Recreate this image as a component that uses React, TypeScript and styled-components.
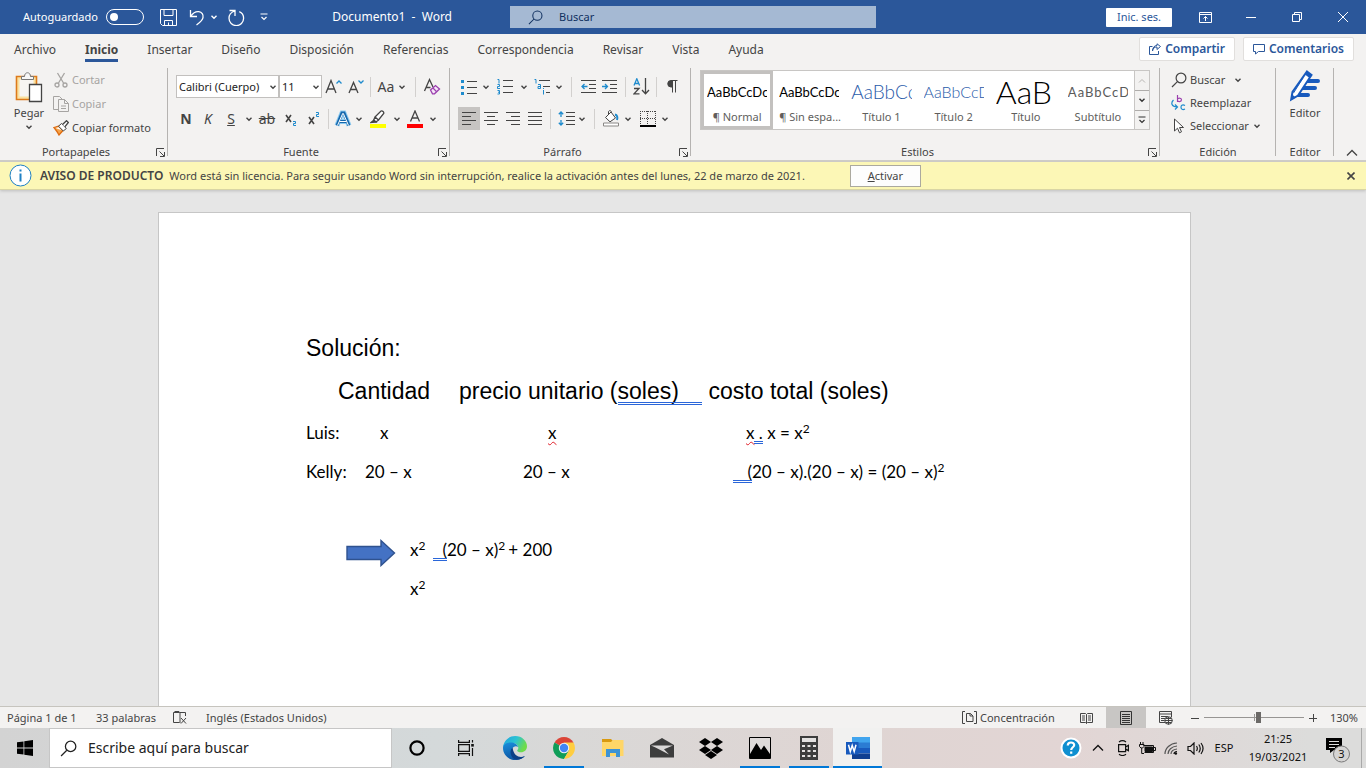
import React from "react";
import styled, { createGlobalStyle, css } from "styled-components";

const ui = `"Noto Sans", "Open Sans", sans-serif`;
const calibri = `Lato, "Noto Sans", sans-serif`;
const blue = "#2b579a";
const ink = "#444444";
const accent = "#1e8bcd";

const GlobalStyle = createGlobalStyle`
  *, *::before, *::after { box-sizing: border-box; }
  html, body, #root { height: 100%; }
  body { margin: 0; font-family: ${ui}; font-size: 11px; line-height: 16px; color: ${ink}; background: #e6e6e6; }
  button, input, select { font: inherit; color: inherit; margin: 0; }
  button { border: 0; padding: 0; background: none; white-space: nowrap; }
  svg { display: block; flex: none; }
`;

const Shell = styled.div`
  height: 100vh;
  min-height: 480px;
  display: flex;
  flex-direction: column;
  overflow: hidden;
`;

/* ---------- title bar ---------- */

const TitleBar = styled.header`
  display: grid;
  grid-template-columns: 510fr 366fr 490fr;
  align-items: center;
  height: 34px;
  flex: none;
  background: ${blue};
  color: #fff;
`;

const QuickAccess = styled.div`
  display: flex;
  align-items: center;
  padding-left: 23px;
`;

const AutoSave = styled.label`
  display: flex;
  align-items: center;
  gap: 8px;
  width: 129px;
`;

const Switch = styled.input`
  appearance: none;
  width: 38px;
  height: 16px;
  border: 1px solid #fff;
  border-radius: 8px;
  display: flex;
  align-items: center;
  padding-left: 3px;
  &::before {
    content: "";
    width: 8px;
    height: 8px;
    border-radius: 50%;
    background: #fff;
  }
`;

const BarButton = styled.button<{ $w: number }>`
  width: ${(p) => p.$w}px;
  height: 32px;
  display: flex;
  align-items: center;
  justify-content: center;
`;

const CloseNotice = styled(BarButton)`
  margin-left: auto;
`;

const DocTitle = styled.h1`
  margin: 0 58px 0 auto;
  font-size: 12px;
  font-weight: 400;
  white-space: pre;
`;

const SearchBox = styled.label`
  display: flex;
  align-items: center;
  gap: 16px;
  height: 22px;
  padding-left: 18px;
  background: #a5b9d3;
  color: #10305f;
`;

const PlainInput = styled.input`
  flex: 1;
  min-width: 0;
  border: 0;
  padding: 0;
  outline: 0;
  background: transparent;
  &::placeholder { color: inherit; opacity: 1; }
`;

const WindowControls = styled.div`
  display: flex;
  align-items: center;
  justify-content: flex-end;
`;

const SignIn = styled.button`
  width: 66px;
  height: 19px;
  margin-right: 10px;
  border-radius: 1px;
  background: #fff;
  color: ${blue};
`;

/* ---------- tabs ---------- */

const TabRow = styled.nav`
  display: flex;
  align-items: center;
  height: 30px;
  flex: none;
  padding: 0 12px 0 14px;
  background: #f3f2f1;
`;

const Tabs = styled.div`
  display: flex;
  align-self: flex-start;
  gap: 29px;
  flex: 1;
`;

const Tab = styled.button<{ $active?: boolean }>`
  height: 28px;
  font-size: 12px;
  border-bottom: 3px solid transparent;
  padding-top: 7px;
  ${(p) => p.$active && css`
    font-weight: 700;
    border-bottom-color: ${blue};
  `}
`;

const ShareButton = styled.button`
  display: flex;
  align-items: center;
  justify-content: center;
  gap: 4px;
  height: 24px;
  padding: 0 9px;
  margin-left: 8px;
  border: 1px solid #e1dfdd;
  border-radius: 2px;
  background: #fff;
  color: ${blue};
  font-size: 12px;
  font-weight: 600;
`;

/* ---------- ribbon ---------- */

const Ribbon = styled.section`
  display: flex;
  flex: none;
  height: 98px;
  padding-top: 4px;
  background: #f3f2f1;
  border-bottom: 2px solid #cfcdc8;
`;

const GroupBox = styled.div<{ $w?: number }>`
  display: flex;
  flex-direction: column;
  background: linear-gradient(#b5b3b1, #b5b3b1) right top / 1px 88px no-repeat;
  ${(p) => (p.$w ? css`width: ${p.$w}px; flex: none;` : css`flex: 1; min-width: 0;`)}
`;

const GroupBody = styled.div`
  flex: 1;
  min-height: 0;
  display: flex;
`;

const GroupFooter = styled.div`
  display: flex;
  align-items: center;
  height: 16px;
  text-align: center;
  span { flex: 1; }
  button { width: 16px; padding-left: 4px; }
`;

const PasteButton = styled.button`
  width: 42px;
  height: 64px;
  margin-left: 8px;
  display: flex;
  flex-direction: column;
  align-items: center;
  padding-top: 3px;
  gap: 2px;
`;

const Stack = styled.div<{ $left: number }>`
  display: flex;
  flex-direction: column;
  margin-left: ${(p) => p.$left}px;
`;

const IconText = styled.button<{ $h: number; $gap?: number; $dim?: boolean }>`
  display: flex;
  align-items: center;
  gap: ${(p) => p.$gap ?? 3}px;
  height: ${(p) => p.$h}px;
  ${(p) => p.$dim && css`color: #a6a4a2;`}
`;

const ToolRows = styled.div`
  display: flex;
  flex-direction: column;
  gap: 9px;
  padding: 7px 0 0 8px;
`;

const ToolRow = styled.div`
  display: flex;
  align-items: center;
  height: 23px;
`;

const Tool = styled.button<{ $w?: number; $on?: boolean }>`
  display: flex;
  align-items: center;
  justify-content: center;
  width: ${(p) => p.$w ?? 22}px;
  height: 23px;
  font-size: 14px;
  ${(p) => p.$on && css`background: #c6c4c2;`}
`;

const Rule = styled.span<{ $w: number }>`
  width: ${(p) => p.$w}px;
  height: 20px;
  background: linear-gradient(#d2d0ce, #d2d0ce) center / 1px 100% no-repeat;
`;

const SelectWrap = styled.span<{ $w: number }>`
  position: relative;
  width: ${(p) => p.$w}px;
  height: 23px;
  svg { position: absolute; right: 2px; top: 8px; pointer-events: none; }
  select {
    appearance: none;
    width: 100%;
    height: 100%;
    padding: 0 0 0 2px;
    border: 1px solid #c2c0be;
    border-radius: 0;
    background: #fff;
    color: #222;
  }
`;

const Gallery = styled.div`
  display: flex;
  flex: 1;
  min-width: 0;
  height: 60px;
  margin: 2px 10px 0 9px;
  border: 1px solid #c8c6c4;
  background: #fff;
`;

const Cards = styled.div`
  display: flex;
  flex: 1;
  min-width: 0;
  overflow: hidden;
`;

const Card = styled.button<{ $on?: boolean }>`
  flex: 1;
  min-width: 0;
  padding: 0 3px;
  border: 3px solid ${(p) => (p.$on ? "#c3c1bf" : "transparent")};
  display: flex;
  flex-direction: column;
  align-items: stretch;
  color: #605e5c;
`;

const Sample = styled.span<{ $size: number; $color: string; $light?: boolean; $spaced?: boolean }>`
  height: 35px;
  line-height: 36px;
  overflow: hidden;
  text-align: left;
  font-family: ${calibri};
  font-size: ${(p) => p.$size}px;
  font-weight: ${(p) => (p.$light ? 300 : 400)};
  color: ${(p) => p.$color};
  letter-spacing: ${(p) => (p.$spaced ? "1px" : "normal")};
`;

const GalleryNav = styled.div`
  display: grid;
  grid-template-rows: 1fr 1fr 1fr;
  width: 15px;
  border-left: 1px solid #c8c6c4;
`;

const NavButton = styled.button<{ $dim?: boolean }>`
  display: flex;
  align-items: center;
  justify-content: center;
  background: #f3f2f1;
  color: ${(p) => (p.$dim ? "#b8b6b4" : "#333")};
  & + & { border-top: 1px solid #aeacaa; }
`;

const EditorButton = styled.button`
  flex: 1;
  height: 56px;
  display: flex;
  flex-direction: column;
  align-items: center;
  gap: 3px;
  padding-top: 2px;
`;

const RibbonEnd = styled.div`
  width: 32px;
  display: flex;
  align-items: flex-end;
  justify-content: center;
  padding: 0 0 3px 4px;
`;

/* ---------- product notice ---------- */

const Notice = styled.div`
  display: flex;
  align-items: center;
  height: 28px;
  flex: none;
  padding: 0 10px 0 9px;
  background: #fcf7b6;
  border-bottom: 1px solid #d9d5a4;
  box-shadow: 0 1px 3px #bdbdbd;
  z-index: 1;
  p { margin: 0 45px 0 6px; white-space: nowrap; }
  strong { margin-left: 8px; font-size: 12px; font-weight: 600; white-space: nowrap; }
`;

const Activate = styled.button`
  width: 71px;
  height: 22px;
  border: 1px solid #aba99f;
  background: #fdfdfd;
`;

/* ---------- document ---------- */

const Workspace = styled.main`
  flex: 1;
  min-height: 0;
  display: flex;
  justify-content: center;
  padding: 22px 17px 0 0;
  overflow: hidden;
`;

const Page = styled.article`
  width: 1033px;
  max-width: 100%;
  padding: 114px 147px 0;
  background: #fff;
  border: 1px solid #c6c6c6;
  border-bottom: 0;
  color: #000;
`;

const Line = styled.div<{ $head?: boolean; $indent?: number }>`
  display: flex;
  align-items: center;
  white-space: pre;
  padding-left: ${(p) => p.$indent ?? 0}px;
  ${(p) => p.$head
    ? css`height: 43px; font: 23px/25px "Liberation Sans", Arial, sans-serif;`
    : css`height: 39px; font: 17px/21px ${calibri};`}
  sup { font-size: 12px; line-height: 0; vertical-align: 6px; }
`;

const Run = styled.span<{ $w?: number }>`
  flex: none;
  ${(p) => p.$w !== undefined && css`width: ${p.$w}px;`}
`;

const Grammar = styled(Run)<{ $end?: boolean }>`
  position: relative;
  text-align: ${(p) => (p.$end ? "right" : "left")};
  &::after {
    content: "";
    position: absolute;
    left: 0;
    right: 0;
    bottom: -1px;
    height: 3px;
    border: 1px solid #2a66d9;
    border-width: 1px 0;
  }
`;

const Spelling = styled.span`
  text-decoration: underline wavy #e0202a 1px;
  text-underline-offset: 2px;
`;

/* ---------- status bar ---------- */

const StatusBar = styled.footer`
  display: flex;
  align-items: center;
  justify-content: space-between;
  height: 22px;
  flex: none;
  padding: 0 8px 0 7px;
  background: #f3f2f1;
  border-top: 1px solid #c6c4be;
  > div { display: flex; align-items: center; height: 100%; }
`;

const StatusItem = styled.button<{ $w: number; $on?: boolean }>`
  display: flex;
  align-items: center;
  gap: 3px;
  width: ${(p) => p.$w}px;
  height: 100%;
  ${(p) => p.$on && css`background: #c8c6c4;`}
`;

const ViewItem = styled(StatusItem)`
  justify-content: center;
`;

const ZoomValue = styled(StatusItem)`
  justify-content: flex-end;
`;

const Zoom = styled.input`
  appearance: none;
  width: 100px;
  height: 12px;
  background:
    linear-gradient(#979593, #979593) center / 1px 7px no-repeat,
    linear-gradient(#979593, #979593) center / 100% 1px no-repeat;
  &::-webkit-slider-thumb {
    appearance: none;
    width: 5px;
    height: 11px;
    background: #6b6967;
  }
`;

/* ---------- taskbar ---------- */

const Taskbar = styled.footer`
  display: flex;
  height: 40px;
  flex: none;
  background: linear-gradient(90deg, #d3d3d3 0%, #d4d9da 32%, #d9d8d7 42%, #dfd5d3 62%, #e2d5d4 78%, #dcdcdb 96%);
  color: #111;
`;

const TaskItem = styled.button<{ $open?: boolean; $active?: boolean }>`
  width: 49px;
  display: flex;
  align-items: center;
  justify-content: center;
  ${(p) => p.$open && css`background: linear-gradient(#0078d7, #0078d7) center bottom / 40px 2px no-repeat;`}
  ${(p) => p.$active && css`background: linear-gradient(#0078d7, #0078d7) center bottom / 100% 2px no-repeat, #f1f1f0;`}
`;

const TaskSearch = styled.label`
  display: flex;
  align-items: center;
  gap: 11px;
  width: 343px;
  padding-left: 10px;
  border: 1px solid #c6c6c6;
  background: #fff;
  font-size: 14px;
  color: #222;
`;

const Tray = styled.div`
  display: flex;
  align-items: stretch;
  margin-left: auto;
`;

const TrayItem = styled.button<{ $w: number }>`
  width: ${(p) => p.$w}px;
  display: flex;
  align-items: center;
  justify-content: center;
`;

const Clock = styled.time`
  width: 74px;
  display: flex;
  flex-direction: column;
  justify-content: center;
  text-align: center;
  line-height: 18px;
`;

const ShowDesktop = styled.span`
  width: 5px;
  border-left: 1px solid #a9a9a9;
`;

/* ---------- icons ---------- */

type IconProps = { w: number; h: number; children: React.ReactNode; c?: string; s?: number };

const Icon = ({ w, h, children, c = "currentColor", s = 1 }: IconProps) => (
  <svg width={w} height={h} viewBox={`0 0 ${w} ${h}`} fill="none" stroke={c} strokeWidth={s} aria-hidden="true">
    {children}
  </svg>
);

const Chevron = () => (
  <Icon w={8} h={8} s={1.4}><path d="M1.5 2.8 4 5.3 6.5 2.8" /></Icon>
);

const Caret = ({ up }: { up?: boolean }) => (
  <Icon w={12} h={8} s={1.3}><path d={up ? "M1 6.5 6 1.5 11 6.5" : "M1 1.5 6 6.5 11 1.5"} /></Icon>
);

const Magnifier = ({ size = 16, s = 1.2 }: { size?: number; s?: number }) => (
  <svg width={size} height={size} viewBox="0 0 16 16" fill="none" stroke="currentColor" strokeWidth={s} aria-hidden="true">
    <circle cx="10" cy="6" r="4.9" />
    <path d="M6.4 9.6 1 15" />
  </svg>
);

const Launcher = () => (
  <Icon w={9} h={9}><path d="M.5 8V.5H8M3.5 3.5l4.5 4.5M8.5 4v4.5H4" /></Icon>
);

const SaveIcon = () => (
  <Icon w={17} h={17}><path d="M.5.5h16v16h-14l-2-2zM4 .5v6h9v-6M4.5 16.5v-5h8v5M8.5 13.5v3" /></Icon>
);

const UndoIcon = () => (
  <Icon w={16} h={17} s={1.3}><path d="M1.5 1v6.5H8M1.7 7.3C4 4 7 2.2 9.8 2.6c3 .4 4.8 3 4.2 6-.5 2.5-3 4.8-6.5 7.4" /></Icon>
);

const RedoIcon = () => (
  <Icon w={17} h={17} s={1.3}><path d="M1.5 1.5H7V7M6.8 2C3.500 3 1 5.800 1 9.300a7.300 7.300 0 0 0 14.600 0c0-3-1.700-5.600-4.300-6.700" /></Icon>
);

const PasteIcon = () => (
  <Icon w={28} h={32}>
    <path d="M1.5 5.500h20v23h-20z" fill="#fbe2a0" stroke="#dd7a1b" strokeWidth="1.6" />
    <path d="M4.500 8.500h14v17h-14z" fill="#f7f5f2" stroke="none" />
    <path d="M6.500 8.500v-3h3c0-5 6-5 6 0h3v3z" fill="#f7f7f7" stroke="#777" />
    <path d="M14.500 13.500h12v17h-12z" fill="#fff" stroke="#444" strokeWidth="1.3" />
  </Icon>
);

const CutIcon = () => (
  <Icon w={16} h={16} c="#a6a4a2" s={1.3}>
    <path d="M4.500 1l6 10M11.500 1l-6 10" />
    <circle cx="4" cy="13" r="2" /><circle cx="12" cy="13" r="2" />
  </Icon>
);

const CopyIcon = () => (
  <Icon w={16} h={16} c="#a6a4a2">
    <path d="M5 13.500H.5v-13h6L9 3M5.500 3.500h6l4 4v8h-10zM11.500 3.500v4h4M8 10h5M8 12.500h5" />
  </Icon>
);

const BrushIcon = () => (
  <Icon w={16} h={16}>
    <path d="M1 7.500l5-1.500 4 4.500-4 4.500c-1-2-3-5-5-7.500z" fill="#f6a34a" stroke="#dd6b10" strokeWidth="1.3" />
    <path d="M2.500 8l3.200-.8 2.800 3z" fill="#fff" stroke="none" />
    <path d="M5.500 6.200l3-2.700 4.800 5-3 2.500z" fill="#fff" />
    <path d="M9.500 4.500l4-3.800 1.800 1.800-3.500 4.300" fill="#fff" strokeWidth="1.3" />
  </Icon>
);

const GrowIcon = ({ up }: { up?: boolean }) => (
  <Icon w={17} h={16} s={1.3}>
    {up ? <path d="M1 14 6 1.500 11 14M2.800 10h6.400" /> : <path d="M2 14 6.500 3.500 11 14M3.500 10.500h6" />}
    <path stroke={accent} d={up ? "M11.500 4.500l2.500-2.500 2.500 2.500" : "M11.500 1.500l2.500 2.500 2.500-2.500"} />
  </Icon>
);

const ClearIcon = () => (
  <Icon w={18} h={18} s={1.3}>
    <path d="M1.500 13 6.500 1.500 10 9M3.500 9.500h4" />
    <path d="M7.500 12l5-4.500 4 3.500-5 4.800h-2z" stroke="#9b3fae" fill="#f5e6f8" /><path d="M10 10l3.500 3.600" stroke="#9b3fae" />
  </Icon>
);

const TextEffectIcon = () => (
  <Icon w={18} h={18}>
    <path d="M3 15.500 8 3h2l5 12.500M5.500 11.500h7" stroke="#8ecbf0" strokeWidth="5" />
    <path d="M3 15.500 8 3h2l5 12.500M5.500 11.500h7" stroke="#1668ad" strokeWidth="3" />
    <path d="M3.500 15.500 8.700 3.500h.6l5.200 12M5.500 11.500h7" stroke="#fff" />
  </Icon>
);

const HighlightIcon = () => (
  <Icon w={16} h={18} s={1.3}>
    <path d="M5 7l6-6c1.500-.5 3.200 1 2.700 2.500L8.500 10zM5 7l-1.500 3.500L6 12l2.500-2" fill="#fff" />
    <path d="M1 12.500l3-2.300 2 1.800z" fill="#444" />
    <path d="M0 14h16v4H0z" fill="#ffff00" stroke="none" />
  </Icon>
);

const FontColorIcon = () => (
  <Icon w={16} h={18} s={1.3}>
    <path d="M3.500 11.500 8 1l4.500 10.500M5 8h6" />
    <path d="M0 14h16v4H0z" fill="#ff0000" stroke="none" />
  </Icon>
);

const BulletsIcon = () => (
  <Icon w={16} h={16}>
    <path d="M0 1h3v3H0zM0 7h3v3H0zM0 13h3v3H0z" fill={accent} stroke="none" />
    <path d="M6 2.500h10M6 8.500h10M6 14.500h10" />
  </Icon>
);

const NumbersIcon = () => (
  <Icon w={16} h={17}>
    <path d="M.5 1.500H2v4M.5 6.500h2v2h-2v2h2.500M.5 12.500h2v3.500h-2M1 14.200h1.500" stroke={accent} />
    <path d="M6 2.500h10M6 8.500h10M6 14.500h10" />
  </Icon>
);

const MultiLevelIcon = () => (
  <Icon w={16} h={17}>
    <path d="M.5 1.500H2v4M4 6.500h2.500v4H4v-2h2M9.500 12v4.500M9.500 10v1" stroke={accent} />
    <path d="M5 2.500h11M9 8.500h7M12 14.500h4" />
  </Icon>
);

const IndentIcon = ({ out }: { out?: boolean }) => (
  <Icon w={15} h={14}>
    <path d="M0 .5h15M8 4.500h7M8 8.500h7M0 12.500h15" />
    <path stroke={accent} strokeWidth="1.3" d={out ? "M6.500 6.500H1M3.500 4 1 6.500 3.500 9" : "M0 6.500h5.500M3 4l2.500 2.500L3 9"} />
  </Icon>
);

const SortIcon = () => (
  <Icon w={17} h={17} s={1.3}>
    <path d="M1 7.500 3.800.8l2.800 6.700M2 5.500h3.600" stroke={accent} />
    <path d="M1 10.500h5L1 15.800h5.500M12.500 0v15.500M9 12l3.500 3.700L16 12" />
  </Icon>
);

const Pilcrow = () => (
  <Icon w={11} h={13}>
    <path d="M5 .5h5.500M5.500.5v12M8.500.5v12" /><path d="M5.500.5H4a3 3 0 0 0 0 6.500h1.500z" fill="#444" />
  </Icon>
);

const AlignIcon = ({ kind }: { kind: "left" | "center" | "right" | "justify" }) => {
  const d = {
    left: "M0 .5h14M0 4.500h9M0 8.500h14M0 12.500h9",
    center: "M0 .5h14M3 4.500h8M0 8.500h14M3 12.500h8",
    right: "M0 .5h14M5 4.500h9M0 8.500h14M5 12.500h9",
    justify: "M0 .5h14M0 4.500h14M0 8.500h14M0 12.500h14",
  }[kind];
  return <Icon w={14} h={13}><path d={d} /></Icon>;
};

const SpacingIcon = () => (
  <Icon w={17} h={15}>
    <path d="M8 1.500h9M8 5.500h9M8 9.500h9M8 13.500h9" />
    <path stroke={accent} strokeWidth="1.3" d="M3 1v5M.8 3.200 3 1l2.200 2.200M3 9v5M.8 11.800 3 14l2.200-2.200" />
  </Icon>
);

const ShadingIcon = () => (
  <Icon w={16} h={17}>
    <path d="M2.500 7.500 8 2l4.500 6L7 11.800zM5.500 5V1.500c1-1.500 3-1 3 1" fill="#fff" />
    <path d="M12 4.500c2 .5 3 2.500 2 5.500" stroke={accent} strokeWidth="2" />
    <path d="M.5 13h15v3H.5z" fill="#fff" stroke="#8a8886" />
  </Icon>
);

const BordersIcon = () => (
  <Icon w={16} h={16}>
    <path strokeDasharray="1 1" d="M0 .5h16M.5 0v15M15.500 0v15M7.500 0v15M0 7.500h16" />
    <path d="M0 15h16" stroke="#000" strokeWidth="2" />
  </Icon>
);

const ReplaceIcon = () => (
  <Icon w={15} h={16} s={1.2}>
    <path d="M6.500 0v7M6.500 4.500c0-2 4-2 4 .3s-4 2.400-4 .2" stroke="#9b3fae" />
    <path d="M14 10.500c-3-1.500-4 .5-4 1.800 0 1.700 1.500 3 4 1.700M2.500 5C-.5 8 .5 11.500 6 12M4 9.500 6.500 12 4 14.500" stroke={accent} />
  </Icon>
);

const PointerIcon = () => (
  <Icon w={15} h={16}><path d="M3.500 1v12l3-2.800 2 4.600 2-1-2-4.300h4z" fill="#fff" /></Icon>
);

const EditorIcon = () => (
  <Icon w={32} h={32}>
    <path d="M17 9h12a1.700 1.700 0 0 1 0 4H14zM12 16h14a1.700 1.700 0 0 1 0 4H9zM10 23h9a1.700 1.700 0 0 1 0 4H4z" fill="#185abd" stroke="none" />
    <path d="M18 1.500 22.500 5 9 25.500 2.200 29.500 3.500 22z" fill="#fff" stroke="#185abd" strokeWidth="2" />
    <path d="M18 1.500 22.500 5 20.500 8 16 4.500zM2 30l1.200-5.500 3.500 3z" fill="#185abd" stroke="none" />
    <path d="M14 8 4.500 23" stroke="#185abd" />
  </Icon>
);

const InfoIcon = () => (
  <Icon w={23} h={23}>
    <circle cx="11.5" cy="11.5" r="10.5" fill="#fff" stroke="#1e80c4" />
    <path d="M11.500 9.500v8M11.500 5.500v2" stroke="#1e80c4" strokeWidth="2" />
  </Icon>
);

const ShareIcon = () => (
  <Icon w={12} h={12}><path d="M3.500 3.500h-3v8h9V8M3.500 8C4 5 5.500 4 8 4V6.500L11.500 3.500 8 .8V2.500C5 2.500 3.500 5 3.500 8z" /></Icon>
);

const CommentIcon = () => (
  <Icon w={12} h={11}><path d="M.5.5h11v7h-6L2.500 10V7.500h-2z" /></Icon>
);

const ProofIcon = () => (
  <Icon w={15} h={13}><path d="M6 1.500H.5v10h6M7 12V1.500h5.500V5M1.500.5H6L7 2M8 7l5 5.500M13 7l-5 5.500" /></Icon>
);

const FocusIcon = () => (
  <Icon w={15} h={13}><path d="M3 .5H.5v12H3M12 .5h2.500v12H12M4.500 2.500h4L11 5v5.500H4.500zM8 2.500V5h3" /></Icon>
);

const BookIcon = () => (
  <Icon w={13} h={12}>
    <path d="M.5 1.500h5l1 1 1-1h5v9H7.500l-1 1-1-1h-5zM6.500 2.500v9M2 4h3M2 6h3M2 8h3M8 4h3M8 6h3M8 8h3" />
  </Icon>
);

const PrintLayoutIcon = () => (
  <Icon w={12} h={14} c="#333"><path d="M.5.5h11v13H.5zM2 3.500h8M2 5.500h8M2 7.500h8M2 9.500h8M2 11.500h8" /></Icon>
);

const WebLayoutIcon = () => (
  <Icon w={14} h={14}>
    <path d="M6 11.500H.5V.5h12V6M.5 3h12M2 5.500h7M2 7.500h4M2 9.500h3" />
    <circle cx="9.5" cy="9.5" r="3.8" fill="#f3f2f1" /><path d="M5.500 9.500h8M9.500 6v7.500M7 7.500h5M7 11.500h5" />
  </Icon>
);

const WindowsLogo = () => (
  <Icon w={16} h={16}>
    <path d="M0 2.300 6.500 1.400V7.600H0zM7.300 1.300 16 0v7.600H7.300zM0 8.400h6.500v6.200L0 13.700zM7.300 8.400H16V16l-8.700-1.300z" fill="#000" stroke="none" />
  </Icon>
);

const TaskViewIcon = () => (
  <Icon w={16} h={16} c="#111" s={1.2}>
    <path d="M.6 0v2.400h10.800V0M.6 16v-2.400h10.800V16M.6 4.600h10.800v6.800H.6zM14.500 0v2.500M14.500 8v8" />
    <path d="M13.200 4h2.600v2.600h-2.600z" fill="#111" stroke="none" />
  </Icon>
);

const EdgeIcon = () => (
  <svg width="24" height="24" viewBox="0 0 24 24" aria-hidden="true">
    <defs>
      <linearGradient id="edgeTop" x1="0" y1="0" x2="1" y2="0.4">
        <stop offset="0" stopColor="#1fa2e0" /><stop offset="0.55" stopColor="#2cc3d2" /><stop offset="1" stopColor="#6fdc4a" />
      </linearGradient>
      <linearGradient id="edgeLow" x1="0" y1="0" x2="0.3" y2="1">
        <stop offset="0" stopColor="#1b8fdc" /><stop offset="1" stopColor="#0c56a4" />
      </linearGradient>
    </defs>
    <path d="M0 11.500C.5 4.500 6 0 12.200 0 19 0 24 5 24 10.300c0 3.700-2.700 6-6 6-2.600 0-4.300-1-3.700-2 .8-1 1-1.600 1-2.500 0-2.500-2.500-4.800-6-4.800C5 7 1.500 9 0 11.500z" fill="url(#edgeTop)" />
    <path d="M0 12c0-3 3-5.500 7.500-5.500 4 0 7 2 7.500 4.500-1.500-1.500-5-1-6 2.500-1.200 4 2.500 8 7.500 8 2 0 4-.6 5.500-1.500C19.500 22.600 16 24 12 24 5.500 24 0 18.600 0 12z" fill="url(#edgeLow)" />
    <path d="M9.500 11.800c-4 3-1.700 11 4 12 3.500-.2 6.500-1.500 8.500-3.800-4 2-11 1.500-12.500-8.200z" fill="#0b3f86" />
  </svg>
);

const ChromeIcon = () => (
  <svg width="22" height="22" viewBox="0 0 22 22" aria-hidden="true">
    <path d="M11 11 1.500 5.500A11 11 0 0 1 20.500 5.500z" fill="#db4437" />
    <path d="M11 11 1.500 5.500A11 11 0 0 0 11 22l5-8.500z" fill="#0f9d58" />
    <path d="M11 5.500h9.500A11 11 0 0 1 11 22l5-8.500z" fill="#ffcd40" />
    <circle cx="11" cy="11" r="5.200" fill="#f4f4f4" /><circle cx="11" cy="11" r="4.200" fill="#4285f4" />
  </svg>
);

const FolderIcon = () => (
  <svg width="22" height="18" viewBox="0 0 22 18" aria-hidden="true">
    <path d="M0 0h9l2 2v4H0z" fill="#d99a10" />
    <path d="M0 3h9l2-2h10.500v16H0z" fill="#ffd667" />
    <path d="M4 18v-8h14v8h-4v-4H8v4z" fill="#3e93d4" />
  </svg>
);

const MailIcon = () => (
  <svg width="24" height="20" viewBox="0 0 24 20" aria-hidden="true">
    <path d="M0 7 12 0l12 7v12.500H0z" fill="#3d3d3d" />
    <path d="M1 7.500h22l-9 3.800 5 5.200L5.500 9.500z" fill="#d9d7d7" />
  </svg>
);

const DropboxIcon = () => (
  <svg width="24" height="21" viewBox="0 0 24 21" aria-hidden="true">
    <path d="M6 0l6 4-6 4-6-4zM18 0l6 4-6 4-6-4zM6 8l6 4-6 4-6-4zM18 8l6 4-6 4-6-4zM6 17l6-4 6 4-6 4z" fill="#000" />
  </svg>
);

const PhotosIcon = () => (
  <svg width="22" height="22" viewBox="0 0 22 22" aria-hidden="true">
    <path d="M.5.5h21v21H.5z" fill="#dedad9" stroke="#000" />
    <path d="M1 17 7.500 6 12 13l3-4.500 6 8.500v4.500H1z" fill="#000" />
  </svg>
);

const CalculatorIcon = () => (
  <svg width="18" height="24" viewBox="0 0 18 24" aria-hidden="true">
    <path d="M0 0h18v24H0z" fill="#3d3d3d" />
    <path d="M2 2h14v4H2zM2 9h3v2H2zM7.500 9h3v2h-3zM13 9h3v2h-3zM2 14h3v2H2zM7.500 14h3v2h-3zM13 14h3v2h-3zM2 19h3v2H2zM7.500 19h3v2h-3zM13 19h3v2h-3z" fill="#e3e1e0" />
  </svg>
);

const WordIcon = () => (
  <svg width="24" height="22" viewBox="0 0 24 22" aria-hidden="true">
    <path d="M6 0h18v6H6z" fill="#41a5ee" /><path d="M6 5.500h18V11H6z" fill="#2b7cd3" />
    <path d="M6 11h18v5.500H6z" fill="#185abd" /><path d="M6 16.500h18V22H6z" fill="#103f91" />
    <path d="M0 5h12.500v12.500H0z" fill="#185abd" />
    <path d="M2.500 7.800 4.300 14.500 6.200 8.500 8.200 14.500 10 7.800" fill="none" stroke="#fff" strokeWidth="1.5" />
  </svg>
);

const HelpIcon = () => (
  <Icon w={22} h={22}>
    <circle cx="11" cy="11" r="9.5" fill="#0f8fd0" stroke="#fff" strokeWidth="2" />
    <path d="M7.800 8.500c0-4 6.400-3.800 6.400-.5 0 2.300-3 2.300-3 5M11.200 14.500v2.300" stroke="#fff" strokeWidth="2.2" />
  </Icon>
);

const MeetIcon = () => (
  <Icon w={13} h={16} s={1.2}><path d="M1.600 4.600h7v7h-7zM8.600 7l2.800-1.600v5.200L8.600 9M2 2c2-1.500 5-1.500 7 0M2 14.200c2 1.500 5 1.500 7 0" /></Icon>
);

const BatteryIcon = () => (
  <Icon w={17} h={12}>
    <path d="M4.500 3.500h10v7h-9M15 5.500h1.500v3H15" /><path d="M6 5h7.500v4.500H6z" fill="#111" />
    <path d="M1.500 0v2M4 0v2M.5 2.500h4.500v2L3.500 6h-1.500L.5 4.500zM2.700 6v5.500H5" />
  </Icon>
);

const WifiIcon = () => (
  <Icon w={14} h={13} s={1.2}>
    <path d="M1 12C1 6 6 1.500 13 1M4 12c0-4 3.500-7.500 9-8M7 12c0-2.500 2-4.500 6-5" stroke="#555" /><path d="M10 12c0-1.500 1-2.300 3-2.500" /><circle cx="11.8" cy="11.5" r="1.3" fill="#111" stroke="none" />
  </Icon>
);

const VolumeIcon = () => (
  <Icon w={17} h={13} s={1.2}><path d="M1 4.500h2.500L7 1v11L3.500 8.500H1zM9.500 4c1 1.500 1 3.500 0 5M11.800 2.500c1.800 2.500 1.800 5.500 0 8M14 1c2.600 3.500 2.600 7.500 0 11" /></Icon>
);

const NotificationIcon = () => (
  <svg width="26" height="32" viewBox="0 -6 26 32" aria-hidden="true">
    <path d="M1 0h16v12H9l-4 3v-3H1z" fill="#000" />
    <path d="M4 3.500h10M4 6.500h10M4 9.500h6" stroke="#ddd" fill="none" />
    <circle cx="16.500" cy="16" r="8" fill="#d5d4d3" stroke="#7a7a7a" />
    <text x="16.500" y="20" textAnchor="middle" fontSize="11" fontFamily="Noto Sans, sans-serif" fill="#111">3</text>
  </svg>
);

const BlockArrow = () => (
  <svg width="50" height="34" viewBox="0 -6 50 34" aria-hidden="true">
    <path d="M1 7.500h34V1.500L48.500 14 35 26.500v-6H1z" fill="#4472c4" stroke="#2f528f" strokeWidth="1.4" />
  </svg>
);

/* ---------- composed parts ---------- */

const Group = ({ w, label, launcher, children }: { w?: number; label: string; launcher?: boolean; children: React.ReactNode }) => (
  <GroupBox $w={w}>
    <GroupBody>{children}</GroupBody>
    <GroupFooter>
      <span>{label}</span>
      {launcher && <button aria-label={`Opciones de ${label}`}><Launcher /></button>}
    </GroupFooter>
  </GroupBox>
);

const Drop = ({ w = 12 }: { w?: number }) => (
  <Tool $w={w} aria-label="Más opciones"><Chevron /></Tool>
);

const tabs = ["Archivo", "Inicio", "Insertar", "Diseño", "Disposición", "Referencias", "Correspondencia", "Revisar", "Vista", "Ayuda"];

const styles = [
  { name: "¶ Normal", sample: "AaBbCcDc", size: 13, color: "#000" },
  { name: "¶ Sin espa...", sample: "AaBbCcDc", size: 13, color: "#000" },
  { name: "Título 1", sample: "AaBbCc", size: 19, color: "#2a5caa", light: true },
  { name: "Título 2", sample: "AaBbCcD", size: 16, color: "#2a5caa", light: true },
  { name: "Título", sample: "AaB", size: 32, color: "#000", light: true },
  { name: "Subtítulo", sample: "AaBbCcD", size: 13, color: "#5a5a5a", spaced: true },
];

const TitleArea = () => (
  <TitleBar>
    <QuickAccess>
      <AutoSave>Autoguardado<Switch type="checkbox" role="switch" /></AutoSave>
      <BarButton $w={32} aria-label="Guardar"><SaveIcon /></BarButton>
      <BarButton $w={26} aria-label="Deshacer"><UndoIcon /></BarButton>
      <BarButton $w={8} aria-label="Más acciones"><Chevron /></BarButton>
      <BarButton $w={36} aria-label="Rehacer"><RedoIcon /></BarButton>
      <BarButton $w={20} aria-label="Personalizar">
        <Icon w={8} h={8} s={1.2}><path d="M.5 1h7M1.500 4 4 6.500 6.500 4" /></Icon>
      </BarButton>
      <DocTitle>{"Documento1  -  Word"}</DocTitle>
    </QuickAccess>
    <SearchBox>
      <Magnifier size={15} s={1.1} />
      <PlainInput placeholder="Buscar" aria-label="Buscar" />
    </SearchBox>
    <WindowControls>
      <SignIn>Inic. ses.</SignIn>
      <BarButton $w={46} aria-label="Opciones de la cinta">
        <Icon w={13} h={11}><path d="M.5.5h12v10H.5zM.5 2.500h12M6.500 9V4.500M4.500 6.500l2-2 2 2" /></Icon>
      </BarButton>
      <BarButton $w={46} aria-label="Minimizar"><Icon w={10} h={10}><path d="M0 5.500h10" /></Icon></BarButton>
      <BarButton $w={46} aria-label="Restaurar">
        <Icon w={10} h={10}><path d="M.5 2.500h7v7h-7zM2.500 2.500v-2h7v7h-2" /></Icon>
      </BarButton>
      <BarButton $w={46} aria-label="Cerrar"><Icon w={10} h={10}><path d="M0 0l10 10M10 0 0 10" /></Icon></BarButton>
    </WindowControls>
  </TitleBar>
);

const RibbonArea = () => (
  <Ribbon>
    <Group w={168} label="Portapapeles" launcher>
      <PasteButton><PasteIcon />Pegar<Chevron /></PasteButton>
      <Stack $left={3}>
        <IconText $h={24} $dim><CutIcon />Cortar</IconText>
        <IconText $h={24} $dim><CopyIcon />Copiar</IconText>
        <IconText $h={24}><BrushIcon />Copiar formato</IconText>
      </Stack>
    </Group>

    <Group w={282} label="Fuente" launcher>
      <ToolRows>
        <ToolRow>
          <SelectWrap $w={103}>
            <select aria-label="Fuente" defaultValue="c"><option value="c">Calibri (Cuerpo)</option></select><Chevron />
          </SelectWrap>
          <SelectWrap $w={43}>
            <select aria-label="Tamaño de fuente" defaultValue="11"><option>11</option></select><Chevron />
          </SelectWrap>
          <Tool $w={22} aria-label="Aumentar tamaño"><GrowIcon up /></Tool>
          <Tool $w={22} aria-label="Disminuir tamaño"><GrowIcon /></Tool>
          <Rule $w={9} />
          <Tool $w={22} aria-label="Mayúsculas y minúsculas">Aa</Tool>
          <Drop w={10} />
          <Rule $w={16} />
          <Tool $w={18} aria-label="Borrar formato"><ClearIcon /></Tool>
        </ToolRow>
        <ToolRow>
          <Tool $w={20}><b>N</b></Tool>
          <Tool $w={24}><i>K</i></Tool>
          <Tool $w={22}><u>S</u></Tool>
          <Drop w={14} />
          <Tool $w={22}><s>ab</s></Tool>
          <Tool $w={26} aria-label="Subíndice">
            <Icon w={12} h={14} s={1.6}><path d="M1 3l5 7M6 3l-5 7" /><path d="M8 9.500h2.500v2H8.500v2H11" stroke={accent} strokeWidth="1" /></Icon>
          </Tool>
          <Tool $w={20} aria-label="Superíndice">
            <Icon w={12} h={14} s={1.6}><path d="M1 5l5 7M6 5l-5 7" /><path d="M8 .5h2.500v2H8.500v2H11" stroke={accent} strokeWidth="1" /></Icon>
          </Tool>
          <Rule $w={8} />
          <Tool $w={22} aria-label="Efectos de texto"><TextEffectIcon /></Tool>
          <Drop w={10} />
          <Tool $w={28} aria-label="Color de resaltado"><HighlightIcon /></Tool>
          <Drop w={10} />
          <Tool $w={26} aria-label="Color de fuente"><FontColorIcon /></Tool>
          <Drop w={10} />
        </ToolRow>
      </ToolRows>
    </Group>

    <Group w={241} label="Párrafo" launcher>
      <ToolRows>
        <ToolRow>
          <Tool aria-label="Viñetas"><BulletsIcon /></Tool>
          <Drop />
          <Tool $w={26} aria-label="Numeración"><NumbersIcon /></Tool>
          <Drop />
          <Tool $w={24} aria-label="Lista multinivel"><MultiLevelIcon /></Tool>
          <Drop w={10} />
          <Rule $w={14} />
          <Tool $w={20} aria-label="Disminuir sangría"><IndentIcon out /></Tool>
          <Tool $w={22} aria-label="Aumentar sangría"><IndentIcon /></Tool>
          <Rule $w={10} />
          <Tool $w={22} aria-label="Ordenar"><SortIcon /></Tool>
          <Rule $w={8} />
          <Tool $w={24} aria-label="Mostrar todo"><Pilcrow /></Tool>
        </ToolRow>
        <ToolRow>
          <Tool $on aria-label="Alinear a la izquierda"><AlignIcon kind="left" /></Tool>
          <Tool aria-label="Centrar"><AlignIcon kind="center" /></Tool>
          <Tool aria-label="Alinear a la derecha"><AlignIcon kind="right" /></Tool>
          <Tool aria-label="Justificar"><AlignIcon kind="justify" /></Tool>
          <Rule $w={8} />
          <Tool $w={24} aria-label="Espaciado"><SpacingIcon /></Tool>
          <Drop w={8} />
          <Rule $w={16} />
          <Tool $w={18} aria-label="Sombreado"><ShadingIcon /></Tool>
          <Drop w={16} />
          <Tool $w={24} aria-label="Bordes"><BordersIcon /></Tool>
          <Drop w={10} />
        </ToolRow>
      </ToolRows>
    </Group>

    <Group label="Estilos" launcher>
      <Gallery>
        <Cards>
          {styles.map((s, i) => (
            <Card key={s.name} $on={i === 0}>
              <Sample $size={s.size} $color={s.color} $light={s.light} $spaced={s.spaced}>{s.sample}</Sample>
              <span>{s.name}</span>
            </Card>
          ))}
        </Cards>
        <GalleryNav>
          <NavButton $dim aria-label="Anterior"><Icon w={8} h={8}><path d="M1 5.500l3-3 3 3" /></Icon></NavButton>
          <NavButton aria-label="Siguiente"><Chevron /></NavButton>
          <NavButton aria-label="Más estilos"><Icon w={8} h={8} s={1.2}><path d="M.5 1h7M1.500 4 4 6.500 6.500 4" /></Icon></NavButton>
        </GalleryNav>
      </Gallery>
    </Group>

    <Group w={116} label="Edición">
      <Stack $left={11}>
        <IconText $h={23}><Magnifier size={16} />Buscar&nbsp;&nbsp;<Chevron /></IconText>
        <IconText $h={23} $gap={4}><ReplaceIcon />Reemplazar</IconText>
        <IconText $h={23} $gap={4}><PointerIcon />Seleccionar<Chevron /></IconText>
      </Stack>
    </Group>

    <Group w={58} label="Editor">
      <EditorButton><EditorIcon />Editor</EditorButton>
    </Group>

    <RibbonEnd><button aria-label="Contraer la cinta"><Caret up /></button></RibbonEnd>
  </Ribbon>
);

const DocumentArea = () => (
  <Workspace>
    <Page>
      <Line $head>Solución:</Line>
      <Line $head $indent={32}>
        <Run $w={121}>Cantidad</Run>
        <Run>precio unitario (</Run>
        <Grammar $w={84}>soles)</Grammar>
        <Run $w={7}> </Run>
        <Run>costo total (soles)</Run>
      </Line>
      <Line>
        <Run $w={74}>Luis:</Run>
        <Run $w={168}>x</Run>
        <Run $w={198}><Spelling>x</Spelling></Run>
        <Spelling>x</Spelling>
        <Grammar> .</Grammar>
        <Run> x = x<sup>2</sup></Run>
      </Line>
      <Line>
        <Run $w={59}>Kelly:</Run>
        <Run $w={158}>20 – x</Run>
        <Run $w={210}>20 – x</Run>
        <Grammar $w={19} $end>(</Grammar>
        <Run>20 – x).(20 – x) = (20 – x)<sup>2</sup></Run>
      </Line>
      <Line />
      <Line $indent={40}>
        <Run $w={64}><BlockArrow /></Run>
        <Run $w={23}>x<sup>2</sup></Run>
        <Grammar $w={14} $end>(</Grammar>
        <Run>20 – x)<sup>2 </sup>+ 200</Run>
      </Line>
      <Line $indent={104}><Run>x<sup>2</sup></Run></Line>
    </Page>
  </Workspace>
);

export default function App() {
  return (
    <Shell>
      <GlobalStyle />
      <TitleArea />
      <TabRow>
        <Tabs>{tabs.map((t) => <Tab key={t} $active={t === "Inicio"}>{t}</Tab>)}</Tabs>
        <ShareButton><ShareIcon />Compartir</ShareButton>
        <ShareButton><CommentIcon />Comentarios</ShareButton>
      </TabRow>
      <RibbonArea />
      <Notice>
        <InfoIcon />
        <strong>AVISO DE PRODUCTO</strong>
        <p>Word está sin licencia. Para seguir usando Word sin interrupción, realice la activación antes del lunes, 22 de marzo de 2021.</p>
        <Activate><u>A</u>ctivar</Activate>
        <CloseNotice $w={10} aria-label="Cerrar aviso">
          <Icon w={8} h={8} s={1.6}><path d="M.5.5l7 7M7.500.5l-7 7" /></Icon>
        </CloseNotice>
      </Notice>
      <DocumentArea />
      <StatusBar>
        <div>
          <StatusItem $w={89}>Página 1 de 1</StatusItem>
          <StatusItem $w={77}>33 palabras</StatusItem>
          <StatusItem $w={33} aria-label="Revisión"><ProofIcon /></StatusItem>
          <StatusItem $w={140}>Inglés (Estados Unidos)</StatusItem>
        </div>
        <div>
          <StatusItem $w={104}><FocusIcon />Concentración</StatusItem>
          <ViewItem $w={40} aria-label="Modo lectura"><BookIcon /></ViewItem>
          <ViewItem $w={40} $on aria-label="Diseño de impresión"><PrintLayoutIcon /></ViewItem>
          <ViewItem $w={40} aria-label="Diseño web"><WebLayoutIcon /></ViewItem>
          <ViewItem $w={18} aria-label="Alejar"><Icon w={8} h={8}><path d="M0 4.500h8" /></Icon></ViewItem>
          <Zoom type="range" min={10} max={230} defaultValue={130} aria-label="Zoom" />
          <ViewItem $w={18} aria-label="Acercar"><Icon w={8} h={8}><path d="M0 4.500h8M4.500 0v8" /></Icon></ViewItem>
          <ZoomValue $w={36}>130%</ZoomValue>
        </div>
      </StatusBar>
      <Taskbar>
        <TaskItem aria-label="Inicio"><WindowsLogo /></TaskItem>
        <TaskSearch>
          <Magnifier size={17} />
          <PlainInput placeholder="Escribe aquí para buscar" aria-label="Escribe aquí para buscar" />
        </TaskSearch>
        <TaskItem aria-label="Cortana"><Icon w={16} h={16} c="#000" s={2.2}><circle cx="8" cy="8" r="6.6" /></Icon></TaskItem>
        <TaskItem aria-label="Vista de tareas"><TaskViewIcon /></TaskItem>
        <TaskItem aria-label="Edge"><EdgeIcon /></TaskItem>
        <TaskItem $open aria-label="Chrome"><ChromeIcon /></TaskItem>
        <TaskItem aria-label="Explorador"><FolderIcon /></TaskItem>
        <TaskItem aria-label="Correo"><MailIcon /></TaskItem>
        <TaskItem aria-label="Dropbox"><DropboxIcon /></TaskItem>
        <TaskItem $open aria-label="Fotos"><PhotosIcon /></TaskItem>
        <TaskItem $open aria-label="Calculadora"><CalculatorIcon /></TaskItem>
        <TaskItem $active aria-label="Word"><WordIcon /></TaskItem>
        <Tray>
          <TrayItem $w={28} aria-label="Ayuda"><HelpIcon /></TrayItem>
          <TrayItem $w={26} aria-label="Iconos ocultos"><Caret up /></TrayItem>
          <TrayItem $w={24} aria-label="Reunirse"><MeetIcon /></TrayItem>
          <TrayItem $w={24} aria-label="Batería"><BatteryIcon /></TrayItem>
          <TrayItem $w={24} aria-label="Red"><WifiIcon /></TrayItem>
          <TrayItem $w={24} aria-label="Volumen"><VolumeIcon /></TrayItem>
          <TrayItem $w={34}>ESP</TrayItem>
          <Clock><span>21:25</span><span>19/03/2021</span></Clock>
          <TrayItem $w={46} aria-label="Notificaciones"><NotificationIcon /></TrayItem>
          <ShowDesktop />
        </Tray>
      </Taskbar>
    </Shell>
  );
}
